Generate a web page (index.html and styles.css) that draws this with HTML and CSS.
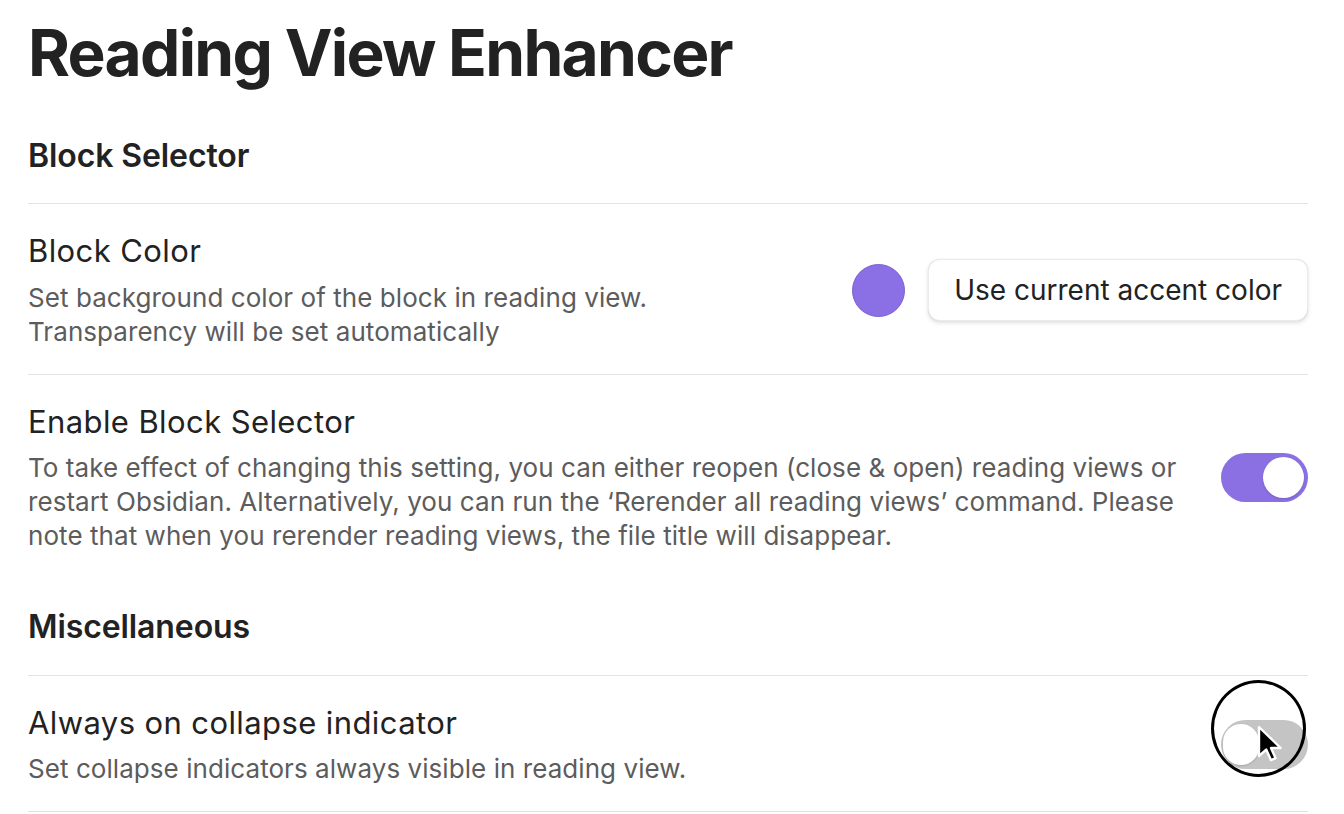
FILE: index.html
```html
<!DOCTYPE html>
<html lang="en">
<head>
<meta charset="utf-8">
<title>Reading View Enhancer</title>
<link rel="stylesheet" href="styles.css">
</head>
<body>
<main class="page">
  <h1 class="title">Reading View Enhancer</h1>

  <div class="setting heading">
    <div class="heading-name">Block Selector</div>
  </div>

  <div class="setting">
    <div class="info">
      <div class="name">Block Color</div>
      <div class="desc">Set background color of the block in reading view.<br>Transparency will be set automatically</div>
    </div>
    <div class="control">
      <span class="swatch"></span>
      <button class="btn">Use current accent color</button>
    </div>
  </div>

  <div class="setting">
    <div class="info">
      <div class="name">Enable Block Selector</div>
      <div class="desc">To take effect of changing this setting, you can either reopen (close &amp; open) reading views or restart Obsidian. Alternatively, you can run the ‘Rerender all reading views’ command. Please note that when you rerender reading views, the file title will disappear.</div>
    </div>
    <div class="control">
      <span class="toggle on"><span class="knob"></span></span>
    </div>
  </div>

  <div class="setting heading no-border">
    <div class="heading-name">Miscellaneous</div>
  </div>

  <div class="setting last">
    <div class="info">
      <div class="name">Always on collapse indicator</div>
      <div class="desc">Set collapse indicators always visible in reading view.</div>
    </div>
    <div class="control">
      <span class="toggle off"><span class="knob"></span></span>
      <span class="click-ring"></span>
      <svg class="cursor" width="26" height="38" viewBox="0 0 13 19" aria-hidden="true">
        <path d="M1 1 L1 15.5 L4.6 12.3 L7 17.6 L9.3 16.6 L7 11.5 L11.8 11.5 Z" fill="#000" stroke="#fff" stroke-width="1.2" stroke-linejoin="round"/>
      </svg>
    </div>
  </div>
</main>
</body>
</html>
```

FILE: styles.css
```css
html, body {
  margin: 0;
  padding: 0;
  background: #ffffff;
}

body {
  font-family: Inter, "Noto Sans", "Liberation Sans", sans-serif;
  color: #222222;
  overflow: hidden;
}

.page {
  padding: 15px 36px 0 28px;
}

.title {
  margin: 0 0 43px 0;
  font-size: 64px;
  line-height: 1.2;
  font-weight: 700;
  letter-spacing: -1.7px;
  color: #222222;
}

.setting {
  display: flex;
  align-items: center;
  justify-content: space-between;
  border-top: 1px solid #e3e3e3;
  padding: 27px 0 25px 0;
}

.setting.heading {
  border-top: none;
  padding: 0 0 27px 0;
}

.setting.heading.no-border {
  padding-top: 28px;
}

.setting.last {
  border-bottom: 1px solid #e3e3e3;
  padding-bottom: 25px;
}

.heading-name {
  font-size: 32px;
  line-height: 1.3;
  font-weight: 600;
  letter-spacing: -0.1px;
  color: #222222;
}

.info {
  flex: 1 1 auto;
  margin-right: 36px;
}

.name {
  font-size: 31px;
  line-height: 1.3;
  font-weight: 400;
  letter-spacing: 0.4px;
  color: #222222;
}

.desc {
  margin-top: 9px;
  font-size: 26px;
  line-height: 34px;
  letter-spacing: 0.06px;
  color: #5c5c5c;
}

.control {
  position: relative;
  flex: 0 0 auto;
  display: flex;
  align-items: center;
  gap: 23px;
}

.swatch {
  width: 51px;
  height: 51px;
  border-radius: 50%;
  background: #8b6fe4;
  border: 1px solid #7a61d0;
}

.btn {
  font-family: Inter, "Noto Sans", "Liberation Sans", sans-serif;
  font-size: 28px;
  color: #222222;
  background: #ffffff;
  border: 1px solid #ececec;
  border-radius: 12px;
  height: 62px;
  padding: 0 25px;
  box-shadow: 0 2px 4px rgba(0, 0, 0, 0.12), 0 0 1px rgba(0, 0, 0, 0.15);
}

.toggle {
  position: relative;
  display: block;
  width: 87px;
  height: 49px;
  border-radius: 25px;
}

.toggle.on {
  background: #8a70e2;
}

.toggle.off {
  background: #c4c4c4;
}

.knob {
  position: absolute;
  top: 4px;
  width: 41px;
  height: 41px;
  border-radius: 50%;
  background: #ffffff;
  box-shadow: 0 1px 2px rgba(0, 0, 0, 0.15);
}

.toggle.on .knob {
  right: 4px;
}

.toggle.off .knob {
  left: 2px;
  width: 36px;
  height: 41px;
  border-radius: 21px;
}

.click-ring {
  position: absolute;
  left: -10px;
  top: -40px;
  width: 89px;
  height: 91px;
  border: 3px solid #000000;
  border-radius: 50%;
}

.cursor {
  position: absolute;
  left: 36px;
  top: 5px;
}
```
